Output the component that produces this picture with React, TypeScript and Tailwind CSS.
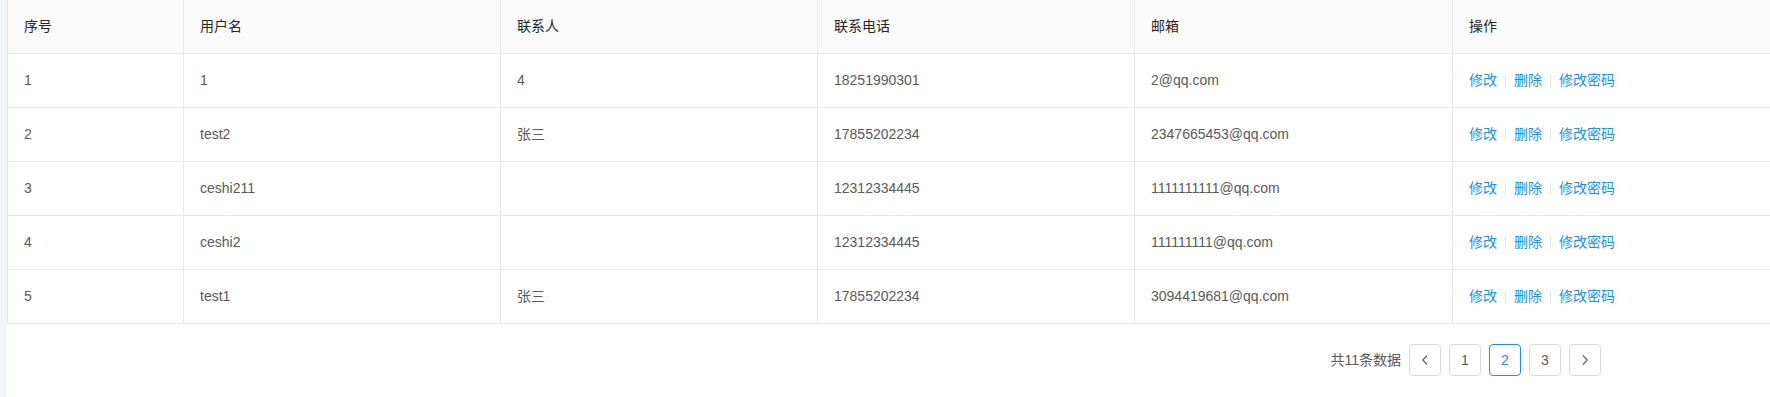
import React from "react";

const rows = [
  ["1", "1", "4", "18251990301", "2@qq.com"],
  ["2", "test2", "张三", "17855202234", "2347665453@qq.com"],
  ["3", "ceshi211", "", "12312334445", "1111111111@qq.com"],
  ["4", "ceshi2", "", "12312334445", "111111111@qq.com"],
  ["5", "test1", "张三", "17855202234", "3094419681@qq.com"],
];

const headers = ["序号", "用户名", "联系人", "联系电话", "邮箱", "操作"];

const gridCls =
  "grid grid-cols-[176px_317px_317px_317px_318px_1fr] h-[54px] border-b border-[#e8e8e8]";
const cellCls = "flex items-center pl-4 border-l border-[#e8e8e8] whitespace-nowrap";

function Divider() {
  return <span className="inline-block w-px h-[12px] bg-[#e8e8e8] mx-2" />;
}

function Chevron({ dir }: { dir: "left" | "right" }) {
  return (
    <svg width="8" height="12" viewBox="0 0 8 12" fill="none">
      {dir === "left" ? (
        <polyline points="6,1.5 1.8,6 6,10.5" stroke="#595959" strokeWidth="1.1" />
      ) : (
        <polyline points="2,1.5 6.2,6 2,10.5" stroke="#595959" strokeWidth="1.1" />
      )}
    </svg>
  );
}

export default function App() {
  return (
    <div
      className="flex w-[1770px] h-[397px] bg-white text-[14px] overflow-hidden"
      style={{ fontFamily: '"Liberation Sans", "Noto Sans CJK SC", sans-serif' }}
    >
      <div className="w-[7px] shrink-0 bg-[#f3f6f9]" />
      <div className="flex-1 flex flex-col bg-white">
        <div className={`${gridCls} bg-[#fafafa] text-[#262626]`}>
          {headers.map((h) => (
            <div key={h} className={cellCls}>
              {h}
            </div>
          ))}
        </div>
        {rows.map((r) => (
          <div key={r[0]} className={`${gridCls} text-[#595959]`}>
            {r.map((c, i) => (
              <div key={i} className={cellCls}>
                {c}
              </div>
            ))}
            <div className={`${cellCls} text-[#1890ff]`}>
              <span>修改</span>
              <Divider />
              <span>删除</span>
              <Divider />
              <span>修改密码</span>
            </div>
          </div>
        ))}
        <div className="flex justify-end items-center mt-5 pr-[169px] gap-2 text-[#595959]">
          <span className="mr-0">共11条数据</span>
          <button className="w-8 h-8 flex items-center justify-center border border-[#d9d9d9] rounded bg-white">
            <Chevron dir="left" />
          </button>
          <button className="w-8 h-8 flex items-center justify-center border border-[#d9d9d9] rounded bg-white text-[#595959]">
            1
          </button>
          <button className="w-8 h-8 flex items-center justify-center border border-[#1890ff] rounded bg-white text-[#1890ff]">
            2
          </button>
          <button className="w-8 h-8 flex items-center justify-center border border-[#d9d9d9] rounded bg-white text-[#595959]">
            3
          </button>
          <button className="w-8 h-8 flex items-center justify-center border border-[#d9d9d9] rounded bg-white">
            <Chevron dir="right" />
          </button>
        </div>
      </div>
    </div>
  );
}
